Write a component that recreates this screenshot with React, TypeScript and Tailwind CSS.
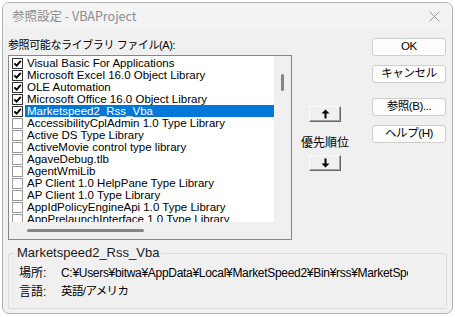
import { Fragment } from 'react';

type LibItem = { name: string; checked: boolean; selected?: boolean };

const items: LibItem[] = [
    { name: 'Visual Basic For Applications', checked: true },
    { name: 'Microsoft Excel 16.0 Object Library', checked: true },
    { name: 'OLE Automation', checked: true },
    { name: 'Microsoft Office 16.0 Object Library', checked: true },
    { name: 'Marketspeed2_Rss_Vba', checked: true, selected: true },
    { name: 'AccessibilityCplAdmin 1.0 Type Library', checked: false },
    { name: 'Active DS Type Library', checked: false },
    { name: 'ActiveMovie control type library', checked: false },
    { name: 'AgaveDebug.tlb', checked: false },
    { name: 'AgentWmiLib', checked: false },
    { name: 'AP Client 1.0 HelpPane Type Library', checked: false },
    { name: 'AP Client 1.0 Type Library', checked: false },
    { name: 'AppIdPolicyEngineApi 1.0 Type Library', checked: false },
    { name: 'AppPrelaunchInterface 1.0 Type Library', checked: false },
];

const font = "font-['Liberation_Sans','Noto_Sans_CJK_JP',sans-serif]";

const CheckBox = ({ checked }: { checked: boolean }) => (
    <div
        className={`w-[11px] h-[11px] shrink-0 bg-white border ${checked ? 'border-[#333333]' : 'border-[#9a9a9a]'}`}
    >
        {checked && (
            <svg width="9" height="9" viewBox="0 0 9 9">
                <path d="M1.3 4.3 L3.6 6.6 L7.8 1.8" fill="none" stroke="#000" strokeWidth="1.9" />
            </svg>
        )}
    </div>
);

const DialogButton = ({ label }: { label: string }) => (
    <div className="w-[74px] h-[18px] flex items-center justify-center rounded-[3px] border border-[#cfcfcf] bg-[#fdfdfd] text-[11.5px] tracking-[-0.4px] leading-none text-black">
        {label}
    </div>
);

const ArrowButton = ({ up }: { up: boolean }) => (
    <div className="w-[32px] h-[16px] flex items-center justify-center bg-[#f0f0f0] border-t border-l border-t-white border-l-white border-b border-r border-b-[#696969] border-r-[#696969] shadow-[inset_-1px_-1px_0_#a0a0a0]">
        <svg width="9" height="10" viewBox="0 0 9 10" className={up ? '' : 'rotate-180'}>
            <path d="M4.5 0.5 L8.5 4.5 L0.5 4.5 Z" fill="#000" />
            <rect x="3.5" y="4" width="2" height="5.5" fill="#000" />
        </svg>
    </div>
);

export default function App() {
    return (
        <div className={`w-[455px] h-[317px] bg-white overflow-hidden ${font}`}>
            <div className="ml-[2px] mt-[2px] w-[451px] h-[312px] rounded-[7px] border border-[#b4b4b4] bg-[#f0f0f0] overflow-hidden flex flex-col">
                {/* title bar */}
                <div className="h-[27px] shrink-0 flex items-center pl-[9px] pr-[8px] bg-[#f3f3f3]">
                    <span className="text-[12.5px] text-[#8c8c8c] font-['Noto_Sans_CJK_JP','Liberation_Sans',sans-serif]">
                        参照設定 - VBAProject
                    </span>
                    <svg width="11" height="11" viewBox="0 0 11 11" className="ml-auto mr-[4px]">
                        <path d="M0.5 0.5 L10.5 10.5 M10.5 0.5 L0.5 10.5" stroke="#9a9a9a" strokeWidth="1" />
                    </svg>
                </div>

                {/* body */}
                <div className="flex h-[210px] shrink-0">
                    <div className="pl-[5px] pt-[8px] w-[289px] shrink-0">
                        <div className="h-[14px] leading-[14px] text-[11px] tracking-[-0.4px] text-black whitespace-nowrap">
                            参照可能なライブラリ ファイル(A):
                        </div>
                        <div className="mt-[3px] w-[284px] h-[185px] border border-[#828790] flex flex-col">
                            <div className="flex flex-1 min-h-0">
                                <div className="w-[265px] bg-white overflow-hidden pt-[1px]">
                                    {items.map((it) => (
                                        <div key={it.name} className="h-[12px] flex items-center pl-[3px]">
                                            <CheckBox checked={it.checked} />
                                            <div
                                                className={`ml-[2px] flex-1 h-[12px] pl-[2px] flex items-center whitespace-nowrap text-[11.5px] leading-[12px] ${
                                                    it.selected ? 'bg-[#0078d7] text-white' : 'text-black'
                                                }`}
                                            >
                                                {it.name}
                                            </div>
                                        </div>
                                    ))}
                                </div>
                                <div className="w-[17px] bg-[#f0f0f0] flex justify-center pt-[18px]">
                                    <div className="w-[3px] h-[17px] rounded-full bg-[#858585]" />
                                </div>
                            </div>
                            <div className="h-[17px] shrink-0 bg-[#f0f0f0] pl-[18px] pt-[7px]">
                                <div className="w-[117px] h-[3px] rounded-full bg-[#858585]" />
                            </div>
                        </div>
                    </div>

                    <div className="ml-[5px] w-[56px] pt-[76px] flex flex-col items-center">
                        <ArrowButton up />
                        <div className="mt-[14px] mb-[5px] h-[14px] leading-[14px] text-[12px] text-black whitespace-nowrap">
                            優先順位
                        </div>
                        <ArrowButton up={false} />
                    </div>

                    <div className="ml-auto pr-[6px] pt-[8px] flex flex-col">
                        {['OK', 'キャンセル', '参照(B)...', 'ヘルプ(H)'].map((b, i) => (
                            <Fragment key={b}>
                                <div className={i === 0 ? '' : i === 2 ? 'mt-[15px]' : 'mt-[9px]'}>
                                    <DialogButton label={b} />
                                </div>
                            </Fragment>
                        ))}
                    </div>
                </div>

                {/* group box */}
                <div className="relative mt-[13px] mx-[5px] h-[56px] border border-[#dcdcdc] rounded-[2px] pl-[10px] pt-[12px]">
                    <span className="absolute -top-[8px] left-[6px] px-[2px] bg-[#f0f0f0] text-[13px] leading-[14px] text-[#1a1a1a]">
                        Marketspeed2_Rss_Vba
                    </span>
                    <div className="flex h-[14px] items-center text-[12px] text-black whitespace-nowrap overflow-hidden w-[389px]">
                        <span className="w-[42px] shrink-0">場所:</span>
                        <span className="tracking-[-0.3px]">
                            C:¥Users¥bitwa¥AppData¥Local¥MarketSpeed2¥Bin¥rss¥MarketSpeed2_Rss_Vba.tlb
                        </span>
                    </div>
                    <div className="flex h-[14px] mt-[5px] items-center text-[12px] text-black whitespace-nowrap">
                        <span className="w-[42px] shrink-0">言語:</span>
                        <span className="text-[11.5px] tracking-[-0.6px]">英語/アメリカ</span>
                    </div>
                </div>
            </div>
        </div>
    );
}
